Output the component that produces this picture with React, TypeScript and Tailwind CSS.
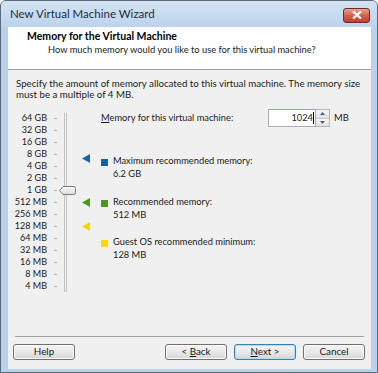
const FONT = { fontFamily: 'Lato, "Liberation Sans", sans-serif' }

const SCALE = ['64 GB', '32 GB', '16 GB', '8 GB', '4 GB', '2 GB', '1 GB', '512 MB', '256 MB', '128 MB', '64 MB', '32 MB', '16 MB', '8 MB', '4 MB']

const LEGEND = [
  { c: 'bg-[#1060ae]', t: 'Maximum recommended memory:', v: '6.2 GB', m: 'mt-[28px]' },
  { c: 'bg-[#4b9a16]', t: 'Recommended memory:', v: '512 MB', m: 'mt-[16px]' },
  { c: 'bg-[#ffd800]', t: 'Guest OS recommended minimum:', v: '128 MB', m: 'mt-[15px]' },
]

function Arrow({ color }: { color: string }) {
  return (
    <svg width="8" height="9" viewBox="0 0 8 9">
      <polygon points="8,0 8,9 0,4.5" fill={color} />
    </svg>
  )
}

function Btn({ children, primary }: { children: React.ReactNode; primary?: boolean }) {
  return (
    <button
      className={`h-[16px] w-[62px] rounded-[3px] border text-[9.8px] leading-none text-[#1a1a1a] bg-gradient-to-b from-[#f4f4f4] via-[#e9e9e9] to-[#d6d6d6] ${
        primary ? 'border-[#3c7fb1] shadow-[inset_0_0_0_1px_#a8e0f8]' : 'border-[#707070] shadow-[inset_0_0_0_1px_#fcfcfc]'
      }`}
    >
      {children}
    </button>
  )
}

export default function App() {
  return (
    <div className="w-[378px] h-[373px] bg-[#b9d1ea] border border-[#5a6a7e] rounded-t-[6px] flex flex-col overflow-hidden" style={FONT}>
      <div className="h-[26px] flex items-center justify-between pl-[9px] pr-[7px] bg-gradient-to-b from-[#d4e3f3] to-[#bcd3ec]">
        <span className="text-[11.5px] text-[#1e2d40]">New Virtual Machine Wizard</span>
        <div className="w-[27px] h-[15px] mt-[2px] rounded-[3px] border border-[#6d2a2a] bg-gradient-to-b from-[#e8a393] via-[#d0614f] to-[#c2402e] flex items-center justify-center">
          <svg width="10" height="8" viewBox="0 0 10 8">
            <path d="M1 0.5 L9 7.5 M9 0.5 L1 7.5" stroke="#fff" strokeWidth="2.2" />
          </svg>
        </div>
      </div>

      <div className="flex-1 ml-[7px] mr-[6px] mb-[3px] flex flex-col">
        <div className="h-[43px] shrink-0 bg-white border-b border-[#a0a0a0] pt-[3px]">
          <div className="pl-[19px] text-[10.5px] font-bold text-black leading-[13px]">Memory for the Virtual Machine</div>
          <div className="pl-[40px] text-[9.3px] text-[#1a1a1a] leading-[13px]">How much memory would you like to use for this virtual machine?</div>
        </div>

        <div className="flex-1 bg-[#f0f0f0] flex flex-col">
          <p className="pt-[8px] px-[8px] text-[9.7px] leading-[11px] text-[#1a1a1a]">
            Specify the amount of memory allocated to this virtual machine. The memory size must be a multiple of 4 MB.
          </p>

          <div className="flex mt-[12px] pl-[8px]">
            <div className="w-[32px] flex flex-col items-end pr-[1px]">
              {SCALE.map((s) => (
                <div key={s} className="h-[12px] text-[9px] leading-[12px] text-[#1a1a1a] whitespace-nowrap">{s}</div>
              ))}
            </div>
            <div className="w-[10px] flex flex-col items-end pr-[1px]">
              {SCALE.map((s) => (
                <div key={s} className="h-[12px] flex items-center"><div className="w-[3px] h-px bg-[#b4b4b4]" /></div>
              ))}
            </div>
            <div className="relative w-[43px] h-[180px]">
              <div className="absolute left-[6px] top-[1px] w-[3px] h-[179px] bg-[#ececec] border-x border-[#c4c4c4]" />
              <svg className="absolute left-[1px] top-[74px]" width="17" height="9" viewBox="0 0 17 9">
                <defs>
                  <linearGradient id="th" x1="0" y1="0" x2="0" y2="1">
                    <stop offset="0" stopColor="#fbfbfb" />
                    <stop offset="1" stopColor="#d9d9d9" />
                  </linearGradient>
                </defs>
                <path d="M0.5 4.5 L4 0.5 H14.5 Q16.5 0.5 16.5 2.5 V6.5 Q16.5 8.5 14.5 8.5 H4 Z" fill="url(#th)" stroke="#7a7a7a" />
              </svg>
              <div className="absolute left-[24px] top-[42px] flex"><Arrow color="#1565b5" /></div>
              <div className="absolute left-[24px] top-[86px] flex"><Arrow color="#4b9a16" /></div>
              <div className="absolute left-[24px] top-[110px] flex"><Arrow color="#f4d500" /></div>
            </div>
            <div className="flex-1 flex flex-col text-[9.3px] text-[#1a1a1a]">
              <div className="flex items-center -mt-[3px] h-[18px]">
                <span className="w-[167px] whitespace-nowrap"><span className="underline">M</span>emory for this virtual machine:</span>
                <div className="w-[48px] h-[18px] bg-white border border-[#abadb3] border-t-[#8aa6c8] flex items-center justify-end pr-[1px]">
                  <span className="leading-none">1024</span><span className="w-px h-[12px] bg-black" />
                </div>
                <div className="w-[14px] h-[18px] flex flex-col border border-[#b5b5b5] border-l-0">
                  <div className="flex-1 bg-gradient-to-b from-[#f6f6f6] to-[#e2e2e2] border-b border-[#c8c8c8] flex items-center justify-center">
                    <svg width="5" height="3" viewBox="0 0 5 3"><polygon points="0,3 5,3 2.5,0" fill="#4d6185" /></svg>
                  </div>
                  <div className="flex-1 bg-gradient-to-b from-[#f6f6f6] to-[#e2e2e2] flex items-center justify-center">
                    <svg width="5" height="3" viewBox="0 0 5 3"><polygon points="0,0 5,0 2.5,3" fill="#4d6185" /></svg>
                  </div>
                </div>
                <span className="ml-[4px]">MB</span>
              </div>

              {LEGEND.map((r) => (
                <div key={r.t} className={`flex ${r.m}`}>
                  <div className={`w-[7px] h-[7px] mt-[4px] mr-[5px] shrink-0 ${r.c}`} />
                  <div className="leading-[12.5px] whitespace-nowrap">
                    <div>{r.t}</div>
                    <div>{r.v}</div>
                  </div>
                </div>
              ))}
            </div>
          </div>

          <div className="mt-auto mx-[7px] border-t border-[#a0a0a0] h-px bg-white mb-[7px]" />
          <div className="flex items-center pb-[9px] pl-[5px] pr-[6px]">
            <Btn>Help</Btn>
            <div className="flex-1" />
            <div className="flex gap-[7px]">
              <Btn>&lt; <span className="underline">B</span>ack</Btn>
              <Btn primary><span className="underline">N</span>ext &gt;</Btn>
              <Btn>Cancel</Btn>
            </div>
          </div>
        </div>
      </div>
    </div>
  )
}
